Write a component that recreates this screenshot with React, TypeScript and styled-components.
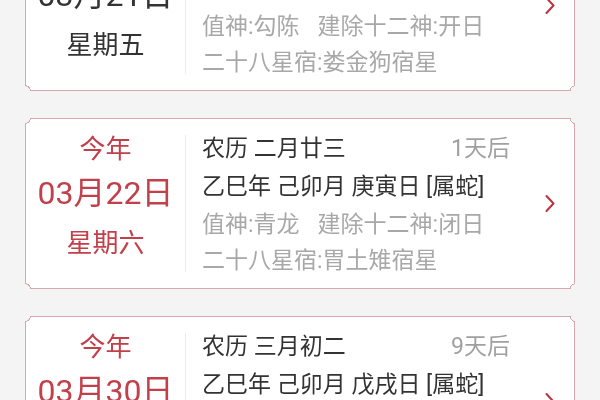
import styled, { createGlobalStyle } from "styled-components";

const GlobalStyle = createGlobalStyle`
  html, body {
    margin: 0;
    padding: 0;
    background: #f4f4f4;
  }
  body {
    font-family: Roboto, "Noto Sans CJK SC", "Noto Sans", sans-serif;
    width: 600px;
    height: 400px;
    overflow: hidden;
  }
`;

const RED = "#c1404a";
const LINE = "#d8a9ac";

const List = styled.div`
  display: flex;
  flex-direction: column;
  gap: 27px;
  padding: 0 25px;
  margin-top: -80px;
`;

// concave corner notches, cut out of the frame with a mask
const notch = (r: number, o: number) => `
  -webkit-mask:
    radial-gradient(circle ${r}px at ${-o}px ${-o}px, #0000 98%, #000) top left,
    radial-gradient(circle ${r}px at calc(100% + ${o}px) ${-o}px, #0000 98%, #000) top right,
    radial-gradient(circle ${r}px at ${-o}px calc(100% + ${o}px), #0000 98%, #000) bottom left,
    radial-gradient(circle ${r}px at calc(100% + ${o}px) calc(100% + ${o}px), #0000 98%, #000) bottom right;
  -webkit-mask-size: 51% 51%;
  -webkit-mask-repeat: no-repeat;
`;

const CardFrame = styled.div`
  background: ${LINE};
  padding: 1px;
  height: 171px;
  box-sizing: border-box;
  ${notch(5, 0)}
`;

const CardBody = styled.div`
  height: 100%;
  background: #fff;
  display: flex;
  align-items: stretch;
  ${notch(6, 1)}
`;

const DateCol = styled.div<{ $hot: boolean }>`
  width: 159px;
  display: flex;
  flex-direction: column;
  align-items: center;
  color: ${(p) => (p.$hot ? RED : "#333")};
  padding-top: 12px;
  box-sizing: border-box;
`;

const YearLabel = styled.div`
  font-size: 26px;
  line-height: 36px;
`;

const DateBig = styled.div`
  font-size: 32px;
  line-height: 46px;
  margin-top: 3px;
`;

const Weekday = styled.div`
  font-size: 26px;
  line-height: 36px;
  margin-top: 9px;
`;

const Divider = styled.div`
  width: 1px;
  background: #ececec;
  margin: 16px 0;
`;

const Info = styled.div`
  flex: 1;
  padding: 12px 16px 0 16px;
  display: flex;
  flex-direction: column;
  font-size: 23px;
`;

const Row = styled.div<{ $muted?: boolean; $gap?: number }>`
  display: flex;
  justify-content: space-between;
  line-height: 36px;
  height: 36px;
  margin-top: ${(p) => p.$gap ?? 0}px;
  color: ${(p) => (p.$muted ? "#a8a8a8" : "#333")};
  white-space: nowrap;
`;

const After = styled.span`
  color: #a0a0a0;
`;

const Spaced = styled.span`
  margin-left: 18px;
`;

const ArrowCol = styled.div`
  width: 48px;
  display: flex;
  align-items: center;
  justify-content: center;
`;

type Day = {
  label: string;
  date: string;
  week: string;
  hot: boolean;
  lunar: string;
  after: string;
  ganzhi: string;
  zhishen: string;
  jianchu: string;
  xiu: string;
};

const days: Day[] = [
  {
    label: "今天",
    date: "03月21日",
    week: "星期五",
    hot: false,
    lunar: "农历 二月廿二",
    after: "今天",
    ganzhi: "乙巳年 己卯月 己丑日 [属蛇]",
    zhishen: "值神:勾陈",
    jianchu: "建除十二神:开日",
    xiu: "二十八星宿:娄金狗宿星",
  },
  {
    label: "今年",
    date: "03月22日",
    week: "星期六",
    hot: true,
    lunar: "农历 二月廿三",
    after: "1天后",
    ganzhi: "乙巳年 己卯月 庚寅日 [属蛇]",
    zhishen: "值神:青龙",
    jianchu: "建除十二神:闭日",
    xiu: "二十八星宿:胃土雉宿星",
  },
  {
    label: "今年",
    date: "03月30日",
    week: "星期日",
    hot: true,
    lunar: "农历 三月初二",
    after: "9天后",
    ganzhi: "乙巳年 己卯月 戊戌日 [属蛇]",
    zhishen: "值神:天刑",
    jianchu: "建除十二神:满日",
    xiu: "二十八星宿:井木犴宿星",
  },
];

function Chevron() {
  return (
    <svg width="12" height="19" viewBox="0 0 12 19">
      <path
        d="M2.5 2 L9.5 9.5 L2.5 17"
        fill="none"
        stroke="#b83540"
        strokeWidth="2"
        strokeLinecap="round"
        strokeLinejoin="round"
      />
    </svg>
  );
}

function DayCard({ day }: { day: Day }) {
  return (
    <CardFrame>
      <CardBody>
        <DateCol $hot={day.hot}>
          <YearLabel>{day.label}</YearLabel>
          <DateBig>{day.date}</DateBig>
          <Weekday>{day.week}</Weekday>
        </DateCol>
        <Divider />
        <Info>
          <Row>
            <span>{day.lunar}</span>
            <After>{day.after}</After>
          </Row>
          <Row $gap={2}>
            <span>{day.ganzhi}</span>
          </Row>
          <Row $muted $gap={2}>
            <span>
              {day.zhishen}
              <Spaced>{day.jianchu}</Spaced>
            </span>
          </Row>
          <Row $muted>
            <span>{day.xiu}</span>
          </Row>
        </Info>
        <ArrowCol>
          <Chevron />
        </ArrowCol>
      </CardBody>
    </CardFrame>
  );
}

export default function App() {
  return (
    <>
      <GlobalStyle />
      <List>
        {days.map((d) => (
          <DayCard key={d.date} day={d} />
        ))}
      </List>
    </>
  );
}
